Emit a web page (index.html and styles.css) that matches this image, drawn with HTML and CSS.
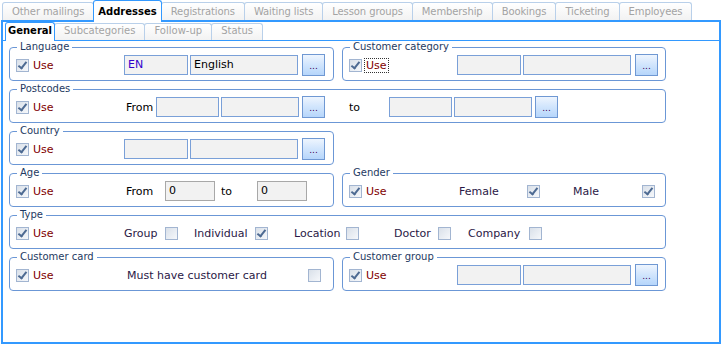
FILE: index.html
```html
<!DOCTYPE html>
<html lang="en">
<head>
    <meta charset="UTF-8">
    <title>Addresses</title>
    <link rel="stylesheet" href="styles.css">
</head>
<body>
    <div class="tabs">
        <div class="tab">Other mailings</div>
        <div class="tab active">Addresses</div>
        <div class="tab">Registrations</div>
        <div class="tab">Waiting lists</div>
        <div class="tab">Lesson groups</div>
        <div class="tab">Membership</div>
        <div class="tab">Bookings</div>
        <div class="tab">Ticketing</div>
        <div class="tab">Employees</div>
    </div>
    <div class="frame">
        <div class="subtabs">
            <div class="subtab active">General</div>
            <div class="subtab">Subcategories</div>
            <div class="subtab">Follow-up</div>
            <div class="subtab">Status</div>
        </div>
        <div class="panel">
            <fieldset class="group">
                <legend>Language</legend>
                <div class="row">
                    <label class="use"><span class="cb on"></span><span>Use</span></label>
                    <span class="field code blue">EN</span>
                    <span class="field name">English</span>
                    <span class="dots">...</span>
                </div>
            </fieldset>
            <fieldset class="group">
                <legend>Customer category</legend>
                <div class="row">
                    <label class="use"><span class="cb on"></span><span class="focus">Use</span></label>
                    <span class="field code"></span>
                    <span class="field name"></span>
                    <span class="dots">...</span>
                </div>
            </fieldset>
            <fieldset class="group wide">
                <legend>Postcodes</legend>
                <div class="row">
                    <label class="use"><span class="cb on"></span><span>Use</span></label>
                    <span class="lbl from">From</span>
                    <span class="field pc-code"></span>
                    <span class="field pc-name"></span>
                    <span class="dots pc-dots">...</span>
                    <span class="lbl to">to</span>
                    <span class="field pc-code"></span>
                    <span class="field pc-name"></span>
                    <span class="dots pc-dots">...</span>
                </div>
            </fieldset>
            <fieldset class="group left">
                <legend>Country</legend>
                <div class="row">
                    <label class="use"><span class="cb on"></span><span>Use</span></label>
                    <span class="field code"></span>
                    <span class="field name"></span>
                    <span class="dots">...</span>
                </div>
            </fieldset>
            <fieldset class="group left">
                <legend>Age</legend>
                <div class="row">
                    <label class="use"><span class="cb on"></span><span>Use</span></label>
                    <span class="lbl age-from">From</span>
                    <span class="field age">0</span>
                    <span class="lbl age-to">to</span>
                    <span class="field age">0</span>
                </div>
            </fieldset>
            <fieldset class="group">
                <legend>Gender</legend>
                <div class="row">
                    <label class="use"><span class="cb on"></span><span>Use</span></label>
                    <label class="opt female">Female<span class="cb on"></span></label>
                    <label class="opt male">Male<span class="cb on"></span></label>
                </div>
            </fieldset>
            <fieldset class="group wide">
                <legend>Type</legend>
                <div class="row">
                    <label class="use"><span class="cb on"></span><span>Use</span></label>
                    <label class="opt t-group">Group<span class="cb"></span></label>
                    <label class="opt t-individual">Individual<span class="cb on"></span></label>
                    <label class="opt t-location">Location<span class="cb"></span></label>
                    <label class="opt t-doctor">Doctor<span class="cb"></span></label>
                    <label class="opt t-company">Company<span class="cb"></span></label>
                </div>
            </fieldset>
            <fieldset class="group">
                <legend>Customer card</legend>
                <div class="row">
                    <label class="use"><span class="cb on"></span><span>Use</span></label>
                    <label class="opt card">Must have customer card<span class="cb"></span></label>
                </div>
            </fieldset>
            <fieldset class="group">
                <legend>Customer group</legend>
                <div class="row">
                    <label class="use"><span class="cb on"></span><span>Use</span></label>
                    <span class="field code"></span>
                    <span class="field name"></span>
                    <span class="dots">...</span>
                </div>
            </fieldset>
        </div>
    </div>
</body>
</html>
```

FILE: styles.css
```css
body {
    margin: 0;
    background: #ffffff;
    font-family: "DejaVu Sans", Verdana, sans-serif;
    font-size: 11px;
    color: #000;
}

/* top tab strip */
.tabs {
    display: flex;
    align-items: flex-end;
    height: 20px;
    padding-left: 2px;
}
.tab {
    box-sizing: border-box;
    height: 18px;
    padding: 0 9px;
    margin-right: -1px;
    border: 1px solid #b9d0ea;
    border-bottom: none;
    border-radius: 3px 3px 0 0;
    background: linear-gradient(#ffffff, #f2f2f2);
    color: #a3a3a3;
    font-size: 10px;
    line-height: 17px;
    letter-spacing: -0.1px;
    white-space: nowrap;
}
.tab.active {
    height: 22px;
    margin-bottom: -2px;
    padding: 0 4px;
    border-color: #3399ff;
    background: #ffffff;
    color: #000;
    font-weight: bold;
    line-height: 21px;
    letter-spacing: 0;
    position: relative;
    z-index: 1;
}

.frame {
    box-sizing: border-box;
    width: 720px;
    height: 324px;
    margin-left: 1px;
    border: 2px solid #3399ff;
}

.subtabs {
    display: flex;
    align-items: flex-end;
    height: 18px;
    padding-left: 2px;
}
.subtab {
    box-sizing: border-box;
    height: 17px;
    padding: 0 9px;
    margin-right: -1px;
    border: 1px solid #b9d0ea;
    border-bottom: none;
    border-radius: 3px 3px 0 0;
    background: linear-gradient(#ffffff, #f2f2f2);
    color: #a3a3a3;
    font-size: 10px;
    line-height: 14px;
}
.subtab.active {
    height: 19px;
    margin-bottom: -1px;
    padding: 0 2px;
    border-color: #3399ff;
    background: #ffffff;
    color: #000;
    font-weight: bold;
    line-height: 16px;
    position: relative;
    z-index: 1;
}

.panel {
    border-top: 1px solid #3399ff;
    padding-left: 6px;
    display: grid;
    grid-template-columns: 325px 324px;
    column-gap: 8px;
    row-gap: 2px;
    align-content: start;
}

/* group boxes */
.group {
    margin: 0;
    min-width: 0;
    padding: 0 6px 4px;
    border: 1px solid #6b97d6;
    border-radius: 4px;
}
.group legend {
    margin-left: 1px;
    padding: 0 3px;
    font-size: 10px;
    line-height: 12px;
    color: #1e3a62;
}
.wide {
    grid-column: 1 / 3;
}
.left {
    grid-column: 1;
}

.row {
    display: flex;
    align-items: center;
    height: 22px;
    margin-top: 1px;
}

.use {
    width: 108px;
    flex: none;
    display: flex;
    align-items: center;
    gap: 4px;
    color: #800000;
}
.focus {
    outline: 1px dotted #333;
    padding: 0 1px;
    margin-left: -1px;
}

/* checkboxes */
.cb {
    box-sizing: border-box;
    width: 13px;
    height: 13px;
    flex: none;
    border: 1px solid #a2b5d1;
    background: linear-gradient(135deg, #d9e0e9, #f6f8fb);
    position: relative;
}
.cb.on::after {
    content: "";
    position: absolute;
    left: 3px;
    top: 0;
    width: 3px;
    height: 7px;
    border: solid #4d6a92;
    border-width: 0 2px 2px 0;
    transform: rotate(38deg);
}

/* text boxes */
.field {
    box-sizing: border-box;
    height: 20px;
    flex: none;
    padding: 0 3px;
    border: 1px solid #7aa0d8;
    background: #f2f2f2;
    line-height: 18px;
}
.field.blue {
    color: #3300cc;
}
.code {
    width: 64px;
}
.name {
    width: 108px;
    margin-left: 2px;
}
.pc-code {
    width: 63px;
}
.pc-name {
    width: 78px;
    margin-left: 2px;
}
.field.age {
    width: 50px;
    border-color: #a8a8a8;
}

.dots {
    box-sizing: border-box;
    width: 23px;
    height: 22px;
    flex: none;
    margin-left: 4px;
    border: 1px solid #6f98d3;
    background: linear-gradient(#eef5fe, #d3e6fd 45%, #b6d6fb);
    color: #400050;
    font-size: 9px;
    line-height: 22px;
    text-align: center;
}
.pc-dots {
    margin-left: 3px;
}

.lbl {
    flex: none;
    box-sizing: border-box;
}
.from {
    width: 32px;
    padding-left: 2px;
}
.to {
    width: 40px;
    margin-left: 24px;
}
.age-from {
    width: 41px;
    padding-left: 2px;
}
.age-to {
    width: 42px;
    padding-left: 6px;
}

/* label + checkbox options */
.opt {
    flex: none;
    box-sizing: border-box;
    display: flex;
    align-items: center;
    justify-content: space-between;
    color: #2a1846;
}
.female {
    width: 83px;
    padding-left: 2px;
}
.male {
    width: 82px;
    margin-left: 33px;
}
.t-group {
    width: 54px;
}
.t-individual {
    width: 74px;
    margin-left: 16px;
}
.t-location {
    width: 65px;
    margin-left: 26px;
}
.t-doctor {
    width: 57px;
    margin-left: 35px;
}
.t-company {
    width: 74px;
    margin-left: 17px;
}
.card {
    width: 197px;
    padding-left: 3px;
}
```
